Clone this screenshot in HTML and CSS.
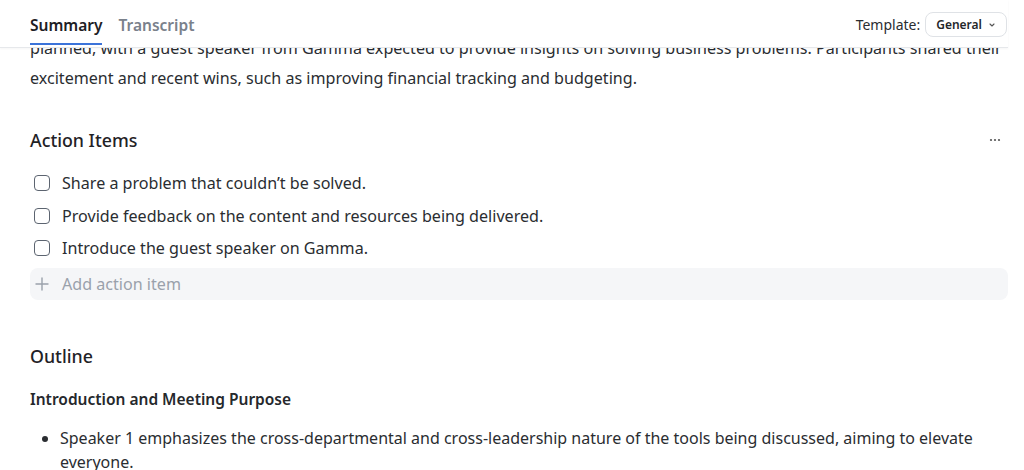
FILE: index.html
```html
<!DOCTYPE html>
<html lang="en">
<head>
<meta charset="utf-8">
<title>Summary</title>
<link rel="stylesheet" href="styles.css">
</head>
<body>
<div class="app">
  <header class="topbar">
    <nav class="tabs">
      <span class="tab active">Summary</span>
      <span class="tab">Transcript</span>
    </nav>
    <div class="template">
      <span class="template-label">Template:</span>
      <button class="select">General
        <svg class="chev" width="8" height="8" viewBox="0 0 8 8"><path d="M2 3l2 2 2-2" fill="none" stroke="#555" stroke-width="1.1" stroke-linecap="round" stroke-linejoin="round"/></svg>
      </button>
    </div>
  </header>
  <main class="scroller">
    <div class="content">
      <p class="overview">planned, with a guest speaker from Gamma expected to provide insights on solving business problems. Participants shared their excitement and recent wins, such as improving financial tracking and budgeting.</p>

      <section class="section actions">
        <div class="section-head">
          <h2>Action Items</h2>
          <svg class="more" width="12" height="4" viewBox="0 0 12 4"><circle cx="2" cy="2" r="1.1" fill="#555"/><circle cx="6" cy="2" r="1.1" fill="#555"/><circle cx="10" cy="2" r="1.1" fill="#555"/></svg>
        </div>
        <ul class="checklist">
          <li><span class="box"></span>Share a problem that couldn’t be solved.</li>
          <li><span class="box"></span>Provide feedback on the content and resources being delivered.</li>
          <li><span class="box"></span>Introduce the guest speaker on Gamma.</li>
        </ul>
        <div class="add-item">
          <svg width="14" height="14" viewBox="0 0 14 14"><path d="M7 1v12M1 7h12" stroke="#9aa1ab" stroke-width="1.4" stroke-linecap="round"/></svg>
          <span>Add action item</span>
        </div>
      </section>

      <section class="section outline">
        <h2>Outline</h2>
        <h3>Introduction and Meeting Purpose</h3>
        <ul class="bullets">
          <li>Speaker 1 emphasizes the cross-departmental and cross-leadership nature of the tools being discussed, aiming to elevate everyone.</li>
        </ul>
      </section>
    </div>
  </main>
</div>
</body>
</html>
```
FILE: styles.css
```css
* { box-sizing: border-box; }
html, body { margin: 0; padding: 0; background: #fff; }
body {
  font-family: "Noto Sans", Lato, sans-serif;
  color: #25282c;
  width: 1024px;
  height: 470px;
  overflow: hidden;
}
.app {
  width: 1008px;
  height: 470px;
  display: flex;
  flex-direction: column;
}
.topbar {
  flex: 0 0 48px;
  height: 48px;
  border-bottom: 1px solid #e6e8eb;
  display: flex;
  align-items: flex-start;
  justify-content: space-between;
  padding: 0 0 0 30px;
  background: #fff;
  box-shadow: 0 1px 2px rgba(0,0,0,0.04);
  position: relative;
  z-index: 2;
}
.tabs { display: flex; gap: 16px; height: 47px; }
.tab {
  font-size: 15.5px;
  font-weight: 600;
  color: #7a818b;
  padding-top: 14px;
  height: 45px;
  border-bottom: 2px solid transparent;
}
.tab.active { color: #1d2024; border-bottom-color: #3b73d9; }
.template {
  display: flex;
  align-items: center;
  gap: 5px;
  padding-top: 12px;
}
.template-label { font-size: 14px; color: #2a2d31; }
.select {
  font-family: inherit;
  font-size: 12px;
  font-weight: 600;
  color: #24272b;
  background: #fff;
  border: 1px solid #dfe2e6;
  border-radius: 8px;
  height: 25px;
  padding: 0 10px;
  margin-right: 1px;
  display: flex;
  align-items: center;
  gap: 6px;
}
.scroller { flex: 1; overflow: hidden; }
.content { padding: 0 0 0 30px; margin-top: -15px; }
.overview {
  margin: 0;
  font-size: 16.1px;
  line-height: 30px;
  color: #2a2d31;
}
.section-head { display: flex; justify-content: space-between; align-items: center; }
h2 { margin: 0; font-size: 17.8px; font-weight: 500; color: #1f2226; line-height: 24px; }
.actions { margin-top: 35px; }
.more { margin-right: 7px; }
.checklist { list-style: none; margin: 15px 0 0; padding: 0; }
.checklist li {
  display: flex;
  align-items: center;
  gap: 12px;
  height: 32.5px;
  font-size: 16.1px;
  color: #2a2d31;
  padding-left: 4px;
}
.box {
  width: 16px; height: 16px;
  border: 1.5px solid #5c6470;
  border-radius: 4px;
  flex: none;
}
.add-item {
  margin-top: 3px;
  height: 32px;
  border-radius: 8px;
  background: #f5f6f8;
  display: flex;
  align-items: center;
  gap: 13px;
  padding-left: 5px;
  font-size: 16.1px;
  color: #9aa1ab;
}
.outline { margin-top: 44px; }
h3 { margin: 19px 0 0; font-size: 15.5px; font-weight: 600; color: #25282c; line-height: 24px; }
.bullets { margin: 15px 0 0; padding-left: 30px; font-size: 16px; line-height: 24px; color: #2a2d31; }
```
